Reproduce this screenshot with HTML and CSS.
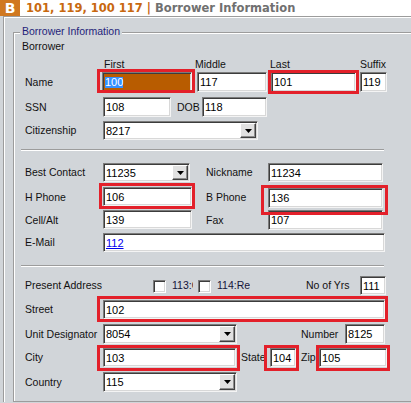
FILE: index.html
```html
<!DOCTYPE html>
<html>
<head>
<meta charset="utf-8">
<link rel="stylesheet" href="styles.css">
</head>
<body>
<div class="hdr"><span class="logo">B</span><span class="ttl"><span class="ids">101, 119, 100 117 |</span> <span class="sec">Borrower Information</span></span></div>
<div class="panel">
  <div class="group">
    <div class="legend">Borrower Information</div>
    <div class="sub">Borrower</div>
    <div class="heads"><span class="h-first">First</span><span class="h-mid">Middle</span><span class="h-last">Last</span><span>Suffix</span></div>

    <div class="row r-name">
      <span class="lbl lbl-name">Name</span>
      <div class="in tall f-first hl"><span class="selt">100</span></div>
      <div class="in tall f-mid">117</div>
      <div class="in tall f-last">101</div>
      <div class="in tall f-suf">119</div>
    </div>

    <div class="row r-ssn">
      <span class="lbl">SSN</span>
      <div class="in tall f-ssn">108</div>
      <span class="lbl-dob">DOB</span>
      <div class="in tall f-dob">118</div>
    </div>

    <div class="row r-cit">
      <span class="lbl">Citizenship</span>
      <div class="in sel f-cit"><span class="v">8217</span><span class="btn"><svg width="7" height="4" viewBox="0 0 7 4"><path d="M0 0H7L3.5 4Z" fill="#000"/></svg></span></div>
    </div>

    <div class="sep sep1"></div>

    <div class="row r-bc">
      <span class="lbl">Best Contact</span>
      <div class="in sel f-bc"><span class="v">11235</span><span class="btn"><svg width="7" height="4" viewBox="0 0 7 4"><path d="M0 0H7L3.5 4Z" fill="#000"/></svg></span></div>
      <span class="lbl-r">Nickname</span>
      <div class="in f-right">11234</div>
    </div>

    <div class="row r-hp">
      <span class="lbl">H Phone</span>
      <div class="in f-short">106</div>
      <span class="lbl-r lbl-r2">B Phone</span>
      <div class="in tall f-right f-bp">136</div>
    </div>

    <div class="row r-cell">
      <span class="lbl">Cell/Alt</span>
      <div class="in f-short">139</div>
      <span class="lbl-r lbl-r2">Fax</span>
      <div class="in tall f-right">107</div>
    </div>

    <div class="row r-mail">
      <span class="lbl">E-Mail</span>
      <div class="in f-wide"><span class="lnk">112</span></div>
    </div>

    <div class="sep sep2"></div>

    <div class="row r-pa">
      <span class="lbl lbl-pa">Present Address</span>
      <span class="cb"></span>
      <span class="clip c1">113:Current</span>
      <span class="cb cb2"></span>
      <span class="clip c2">114:Rent</span>
      <span class="lbl-yrs">No of Yrs</span>
      <div class="in f-yrs">111</div>
    </div>

    <div class="row r-st">
      <span class="lbl">Street</span>
      <div class="in f-wide">102</div>
    </div>

    <div class="row r-unit">
      <span class="lbl">Unit Designator</span>
      <div class="in tall sel f-unit"><span class="v">8054</span><span class="btn"><svg width="7" height="4" viewBox="0 0 7 4"><path d="M0 0H7L3.5 4Z" fill="#000"/></svg></span></div>
      <span class="lbl-num">Number</span>
      <div class="in tall f-num">8125</div>
    </div>

    <div class="row r-city">
      <span class="lbl">City</span>
      <div class="in f-city">103</div>
      <span class="lbl-state">State</span>
      <div class="in f-state">104</div>
      <span class="lbl-zip">Zip</span>
      <div class="in f-zip">105</div>
    </div>

    <div class="row r-cty">
      <span class="lbl">Country</span>
      <div class="in tall sel f-unit"><span class="v">115</span><span class="btn"><svg width="7" height="4" viewBox="0 0 7 4"><path d="M0 0H7L3.5 4Z" fill="#000"/></svg></span></div>
    </div>
  </div>
</div>

<div class="mark m-first"></div>
<div class="mark m-last"></div>
<div class="mark m-hp"></div>
<div class="mark m-bp"></div>
<div class="mark m-st"></div>
<div class="mark m-city"></div>
<div class="mark m-state"></div>
<div class="mark m-zip"></div>
</body>
</html>
```

FILE: styles.css
```css
html, body {
  margin: 0;
  padding: 0;
}
body {
  position: relative;
  width: 411px;
  height: 403px;
  overflow: hidden;
  background: #d1d5d9;
  font-family: "Liberation Sans", Arial, sans-serif;
  font-size: 10.5px;
  color: #111;
}

/* header */
.hdr {
  height: 16px;
  background: #fff;
  display: flex;
  align-items: center;
}
.logo {
  width: 20px;
  height: 16px;
  flex: none;
  background: #d07820;
  color: #fff;
  font: bold 14px/16px "DejaVu Sans", sans-serif;
  text-align: center;
}
.ttl {
  margin-left: 6px;
  font: bold 11.5px/16px "DejaVu Sans", sans-serif;
  white-space: nowrap;
}
.ids { color: #c8680f; }
.sec { color: #707070; }

/* frames */
.panel {
  margin-left: 3px;
  border-top: 1px solid #9c9c9c;
  border-left: 1px solid #9c9c9c;
  box-shadow: inset 1px 1px 0 #fff;
  padding: 15px 0 0 9px;
}
.group {
  width: 420px;
  border-top: 1px solid #9c9c9c;
  border-left: 1px solid #9c9c9c;
  border-bottom: 1px solid #9c9c9c;
  box-shadow: inset 1px 1px 0 #fff;
  padding-bottom: 9px;
}
.legend {
  width: max-content;
  margin: -8px 0 0 6px;
  padding: 0 2px;
  background: #d1d5d9;
  line-height: 13px;
  color: #1f1f7a;
}
.sub {
  margin: 2px 0 0 8px;
  line-height: 13px;
}
.heads {
  margin-top: 5px;
  padding-left: 90px;
  line-height: 13px;
  display: flex;
  white-space: nowrap;
}
.h-first { width: 91px; }
.h-mid { width: 75px; }
.h-last { width: 90px; }

/* rows */
.row {
  display: flex;
  align-items: flex-start;
  padding-left: 11px;
}
.lbl {
  width: 78px;
  flex: none;
  align-self: center;
  line-height: 13px;
  white-space: nowrap;
}
.lbl-name { width: 77px; }
.r-name { margin-top: 1px; }
.r-ssn { margin-top: 5px; }
.r-cit { margin-top: 4px; }
.r-bc { margin-top: 12px; }
.r-hp { margin-top: 5px; }
.r-cell { margin-top: 2px; }
.r-mail { margin-top: 3px; }
.r-pa { margin-top: 9px; }
.r-st { margin-top: 5px; }
.r-unit { margin-top: 5px; }
.r-city { margin-top: 4px; }
.r-cty { margin-top: 5px; }

.sep {
  margin-left: 7px;
  width: 363px;
  border-top: 1px solid #9c9c9c;
  border-bottom: 1px solid #fff;
}
.sep1 { margin-top: 9px; }
.sep2 { margin-top: 13px; }

/* inputs */
.in {
  flex: none;
  box-sizing: border-box;
  height: 19px;
  background: #fff;
  border: 1px solid;
  border-color: #7b7b7b #f4f4f4 #f4f4f4 #7b7b7b;
  box-shadow: inset 1px 1px 0 #3c3c3c, inset -1px -1px 0 #d8d8d8;
  padding-left: 2px;
  font-size: 11px;
  color: #000;
  display: flex;
  align-items: center;
  white-space: nowrap;
  overflow: hidden;
}
.in.tall { height: 20px; }
.hl { background: #b85c00; }
.selt {
  background: #3390ff;
  color: #fff;
  line-height: 11px;
  display: inline-block;
}
.lnk {
  color: #0000ee;
  text-decoration: underline;
}

.sel { padding-right: 1px; }
.sel .v { flex: 1; }
.btn {
  flex: none;
  box-sizing: border-box;
  width: 16px;
  height: calc(100% - 2px);
  background: #e1e1e1;
  border: 1px solid;
  border-color: #fff #404040 #404040 #fff;
  box-shadow: inset -1px -1px 0 #8c8c8c;
  display: flex;
  align-items: center;
  justify-content: center;
}
.btn svg { display: block; }

.f-first { width: 90px; }
.f-mid { width: 70px; margin-left: 5px; }
.f-last { width: 85px; margin-left: 4px; }
.f-suf { width: 27px; margin-left: 4px; }
.f-ssn { width: 68px; }
.lbl-dob { margin-left: 6px; width: 25px; line-height: 13px; align-self: center; }
.f-dob { width: 65px; }
.f-cit { width: 155px; }
.f-bc { width: 87px; }
.lbl-r { margin-left: 16px; width: 62px; line-height: 13px; align-self: center; white-space: nowrap; }
.lbl-r2 { margin-left: 14px; }
.f-right { width: 115px; }
.f-bp { margin-top: 1px; }
.f-short { width: 89px; }
.f-wide { width: 282px; }

.lbl-pa { width: 128px; }
.cb {
  flex: none;
  box-sizing: border-box;
  width: 13px;
  height: 13px;
  margin-top: 4px;
  background: #fff;
  border: 1px solid;
  border-color: #7b7b7b #fff #fff #7b7b7b;
  box-shadow: inset 1px 1px 0 #3c3c3c, inset -1px -1px 0 #d8d8d8;
}
.cb2 { margin-left: 5px; }
.clip {
  flex: none;
  align-self: center;
  line-height: 13px;
  overflow: hidden;
  white-space: nowrap;
  margin-left: 6px;
  color: #14143a;
}
.c1 { width: 21px; }
.c2 { width: 33px; }
.lbl-yrs { margin-left: 56px; width: 54px; line-height: 13px; align-self: center; white-space: nowrap; }
.f-yrs { width: 26px; }

.f-unit { width: 134px; }
.lbl-num { margin-left: 64px; width: 44px; line-height: 13px; align-self: center; }
.f-num { width: 40px; }

.f-city { width: 133px; }
.lbl-state { margin-left: 5px; width: 29px; line-height: 13px; align-self: center; }
.f-state { width: 26px; }
.lbl-zip { margin-left: 5px; width: 18px; line-height: 13px; align-self: center; }
.f-zip { width: 68px; }

/* red annotation boxes overlaying the form */
.mark {
  position: absolute;
  box-sizing: border-box;
  border: 3px solid #e3202a;
}
.m-first { left: 97px; top: 69px; width: 98px; height: 24px; }
.m-last { left: 268px; top: 70px; width: 91px; height: 24px; }
.m-hp { left: 99px; top: 183px; width: 96px; height: 26px; }
.m-bp { left: 261px; top: 185px; width: 127px; height: 30px; }
.m-st { left: 97px; top: 296px; width: 291px; height: 26px; }
.m-city { left: 97px; top: 345px; width: 143px; height: 26px; }
.m-state { left: 264px; top: 345px; width: 35px; height: 26px; }
.m-zip { left: 316px; top: 345px; width: 74px; height: 26px; }
```
